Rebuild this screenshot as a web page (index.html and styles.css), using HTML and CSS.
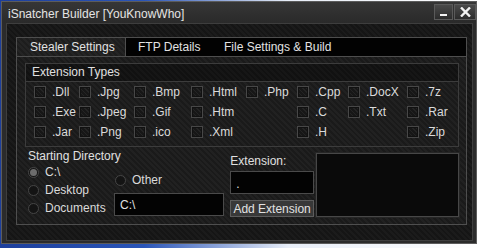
FILE: index.html
```html
<!DOCTYPE html>
<html lang="en">
<head>
  <meta charset="UTF-8">
  <title>iSnatcher Builder</title>
  <link rel="stylesheet" href="styles.css">
</head>
<body>
  <div class="window">
    <div class="titlebar">
      <span class="title">iSnatcher Builder [YouKnowWho]</span>
      <div class="controls">
        <button class="ctl ctl-min"><span class="min-bar"></span></button>
        <button class="ctl ctl-close">
          <svg width="11" height="10" viewBox="0 0 11 10"><path d="M1 0.5 L10 9.5 M10 0.5 L1 9.5" stroke="#f2f2f2" stroke-width="2.4"/></svg>
        </button>
      </div>
    </div>

    <div class="content">
      <div class="tabs">
        <div class="tabstrip">
          <div class="tab tab-active">Stealer Settings</div>
          <div class="tab tab-ftp">FTP Details</div>
          <div class="tab tab-file">File Settings &amp; Build</div>
        </div>

        <div class="page">
          <div class="group">
            <div class="group-head">Extension Types</div>
            <div class="ext-grid">
              <label class="chk"><span class="box"></span>.Dll</label>
              <label class="chk"><span class="box"></span>.Jpg</label>
              <label class="chk"><span class="box"></span>.Bmp</label>
              <label class="chk"><span class="box"></span>.Html</label>
              <label class="chk"><span class="box"></span>.Php</label>
              <label class="chk"><span class="box"></span>.Cpp</label>
              <label class="chk"><span class="box"></span>.DocX</label>
              <label class="chk"><span class="box"></span>.7z</label>

              <label class="chk"><span class="box"></span>.Exe</label>
              <label class="chk"><span class="box"></span>.Jpeg</label>
              <label class="chk"><span class="box"></span>.Gif</label>
              <label class="chk"><span class="box"></span>.Htm</label>
              <span></span>
              <label class="chk"><span class="box"></span>.C</label>
              <label class="chk"><span class="box"></span>.Txt</label>
              <label class="chk"><span class="box"></span>.Rar</label>

              <label class="chk"><span class="box"></span>.Jar</label>
              <label class="chk"><span class="box"></span>.Png</label>
              <label class="chk"><span class="box"></span>.ico</label>
              <label class="chk"><span class="box"></span>.Xml</label>
              <span></span>
              <label class="chk"><span class="box"></span>.H</label>
              <span></span>
              <label class="chk"><span class="box"></span>.Zip</label>
            </div>
          </div>

          <div class="lower">
            <div class="dir">
              <div class="label">Starting Directory</div>
              <label class="radio"><span class="dot checked"></span>C:\</label>
              <label class="radio"><span class="dot"></span>Desktop</label>
              <label class="radio"><span class="dot"></span>Documents</label>
            </div>
            <div class="other">
              <label class="radio"><span class="dot"></span>Other</label>
              <div class="field field-dir">C:\</div>
            </div>
            <div class="ext">
              <div class="label">Extension:</div>
              <div class="field field-ext">.</div>
              <button class="add-btn">Add Extension</button>
            </div>
            <div class="listbox"></div>
          </div>
        </div>
      </div>
    </div>
  </div>
</body>
</html>
```

FILE: styles.css
```css
* {
  box-sizing: border-box;
}

body {
  margin: 0;
  width: 480px;
  height: 248px;
  overflow: hidden;
  background: linear-gradient(90deg, #1d3f9c 0%, #2a55b8 30%, #e8eef8 60%, #ffffff 100%);
  font-family: "Liberation Sans", Arial, sans-serif;
  font-size: 12px;
  color: #dcdcdc;
}

.window {
  margin: 1px 0 0 1px;
  width: 476px;
  height: 243px;
  border: 1px solid #5c5c5c;
  background: #2b2b2b;
  display: flex;
  flex-direction: column;
}

.titlebar {
  height: 21px;
  display: flex;
  justify-content: space-between;
  align-items: flex-start;
  background: linear-gradient(#363636, #2a2a2a);
}

.title {
  padding: 5px 0 0 6px;
  line-height: 14px;
  color: #e4e4e4;
}

.controls {
  display: flex;
  gap: 1px;
  padding-top: 2px;
}

.ctl {
  height: 16px;
  padding: 0;
  border: 1px solid #5a5a5a;
  background: linear-gradient(#4a4a4a, #2c2c2c);
  display: flex;
  align-items: center;
  justify-content: center;
}

.ctl-min {
  width: 19px;
  align-items: flex-end;
  padding-bottom: 3px;
}

.min-bar {
  width: 7px;
  height: 2px;
  background: #f2f2f2;
}

.ctl-close {
  width: 22px;
}

.content {
  flex: 1;
  margin: 0 3px 2px 4px;
  border: 1px solid #3e3e3e;
  padding: 13px 5px 15px 9px;
  background: repeating-linear-gradient(45deg, #1b1b1b 0 2px, #151515 2px 4px);
}

.tabs {
  height: 188px;
  border: 1px solid #4e4e4e;
  display: flex;
  flex-direction: column;
}

.tabstrip {
  height: 19px;
  display: flex;
  background: #020202;
  border-bottom: 1px solid #4e4e4e;
}

.tab {
  line-height: 18px;
  color: #e2e2e2;
  padding-left: 12px;
  white-space: nowrap;
}

.tab-active {
  width: 109px;
  padding-left: 13px;
  border-right: 1px solid #4e4e4e;
  background: repeating-linear-gradient(45deg, #242424 0 2px, #1d1d1d 2px 4px);
}

.tab-ftp {
  width: 86px;
}

.tab-file {
  padding-left: 12px;
}

.page {
  flex: 1;
  padding: 6px 7px 0 8px;
  background: repeating-linear-gradient(45deg, #212121 0 2px, #1a1a1a 2px 4px);
}

.group {
  border: 1px solid #3c3c3c;
}

.group-head {
  height: 18px;
  line-height: 17px;
  padding-left: 6px;
  border-bottom: 1px solid #3c3c3c;
  background: repeating-linear-gradient(45deg, #161616 0 2px, #111111 2px 4px);
  color: #e0e0e0;
}

.ext-grid {
  display: grid;
  grid-template-columns: 45px 55px 57px 55px 51px 51px 59px 1fr;
  grid-auto-rows: 20px;
  padding: 0 0 4px 8px;
}

.chk {
  display: flex;
  align-items: center;
  gap: 6px;
  color: #dadada;
  white-space: nowrap;
}

.box {
  width: 12px;
  height: 12px;
  border: 1px solid #474747;
  background: repeating-linear-gradient(45deg, #242424 0 1px, #171717 1px 3px);
  box-shadow: inset 0 0 0 1px #111;
}

.lower {
  display: flex;
  padding: 2px 0 0 3px;
}

.label {
  line-height: 14px;
  color: #e0e0e0;
  white-space: nowrap;
}

.dir {
  width: 86px;
  display: flex;
  flex-direction: column;
}

.radio {
  height: 18px;
  display: flex;
  align-items: center;
  gap: 6px;
  color: #dadada;
  white-space: nowrap;
}

.dot {
  width: 11px;
  height: 11px;
  border-radius: 50%;
  border: 1px solid #464646;
  background: #141414;
  display: flex;
  align-items: center;
  justify-content: center;
}

.dot.checked::after {
  content: "";
  width: 7px;
  height: 7px;
  border-radius: 50%;
  background: #6c6c6c;
}

.other {
  width: 111px;
  padding-top: 22px;
  display: flex;
  flex-direction: column;
  gap: 4px;
}

.other .radio {
  padding-left: 1px;
}

.field {
  background: #030303;
  border: 1px solid #4a4a4a;
  color: #e0e0e0;
  line-height: 14px;
}

.field-dir {
  height: 23px;
  padding: 4px 5px;
}

.ext {
  width: 84px;
  margin-left: 6px;
  padding-top: 5px;
  display: flex;
  flex-direction: column;
}

.field-ext {
  height: 23px;
  margin-top: 3px;
  padding: 5px 5px 3px;
}

.add-btn {
  height: 17px;
  margin-top: 6px;
  padding: 0;
  border: 1px solid #5c5c5c;
  background: #383838;
  color: #e2e2e2;
  font-family: inherit;
  font-size: 12px;
  line-height: 14px;
}

.listbox {
  width: 144px;
  height: 64px;
  margin: 4px 0 0 2px;
  background: #0a0a0a;
  border: 1px solid #474747;
  box-shadow: 0 0 0 1px #262626;
}
```
